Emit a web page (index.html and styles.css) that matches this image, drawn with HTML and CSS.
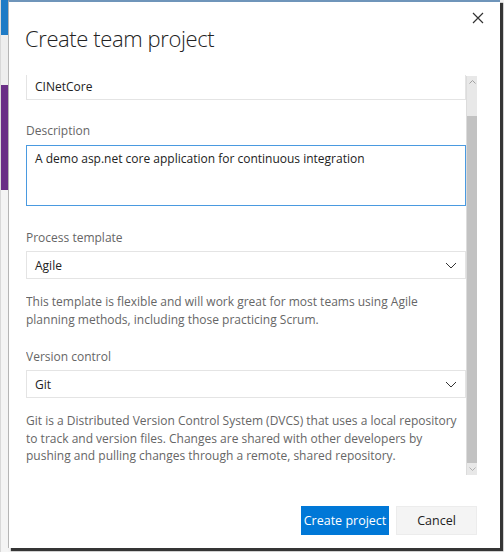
FILE: index.html
```html
<!DOCTYPE html>
<html>
<head>
<meta charset="utf-8">
<link rel="stylesheet" href="styles.css">
</head>
<body>
<div class="screen">
  <div class="strip">
    <div class="strip-blue"></div>
    <div class="strip-gray"></div>
    <div class="strip-purple"></div>
    <div class="strip-light"></div>
  </div>
  <div class="dialog">
    <div class="header">
      <h1 class="title">Create team project</h1>
      <button class="close" aria-label="Close">
        <svg width="12" height="12" viewBox="0 0 12 12"><path d="M1 1 L11 11 M11 1 L1 11" stroke="#333" stroke-width="1.2" fill="none"/></svg>
      </button>
    </div>
    <div class="scroll-area">
      <div class="content">
        <div class="scrolled">
          <div class="input">CINetCore</div>
          <div class="label label-first">Description</div>
          <div class="textarea">A demo asp.net core application for continuous integration</div>
          <div class="label label-after-area">Process template</div>
          <div class="select">
            <span>Agile</span>
            <svg class="chev" width="12" height="7" viewBox="0 0 12 7"><path d="M1 1 L6 6 L11 1" stroke="#333" stroke-width="1" fill="none"/></svg>
          </div>
          <p class="help">This template is flexible and will work great for most teams using Agile planning methods, including those practicing Scrum.</p>
          <div class="label label-after-help">Version control</div>
          <div class="select">
            <span>Git</span>
            <svg class="chev" width="12" height="7" viewBox="0 0 12 7"><path d="M1 1 L6 6 L11 1" stroke="#333" stroke-width="1" fill="none"/></svg>
          </div>
          <p class="help help-git">Git is a Distributed Version Control System (DVCS) that uses a local repository to track and version files. Changes are shared with other developers by pushing and pulling changes through a remote, shared repository.</p>
        </div>
      </div>
      <div class="scrollbar">
        <div class="sb-arrow sb-up"><svg width="7" height="4" viewBox="0 0 7 4"><path d="M0.5 3.5 L3.5 0.5 L6.5 3.5" stroke="#a0a0a0" fill="none"/></svg></div>
        <div class="sb-gap"></div>
        <div class="sb-thumb"></div>
        <div class="sb-arrow sb-down"><svg width="7" height="4" viewBox="0 0 7 4"><path d="M0.5 0.5 L3.5 3.5 L6.5 0.5" stroke="#b0b0b0" fill="none"/></svg></div>
      </div>
    </div>
    <div class="footer">
      <button class="btn btn-primary">Create project</button>
      <button class="btn btn-secondary">Cancel</button>
    </div>
  </div>
</div>
</body>
</html>
```
FILE: styles.css
```css
* { box-sizing: border-box; }
html, body { margin: 0; padding: 0; }
body {
  width: 504px;
  height: 552px;
  overflow: hidden;
  background: #f2f2f2;
  font-family: "Open Sans", "Noto Sans", sans-serif;
  font-size: 12px;
  color: #222;
}
.screen {
  display: flex;
  height: 552px;
}
.strip {
  width: 8px;
  display: flex;
  flex-direction: column;
  border-left: 1px solid #d8d8d8;
}
.strip-blue { height: 35px; background: #1e7bc6; }
.strip-gray { height: 50px; background: #eeeeee; }
.strip-purple { height: 105px; background: #6a2f86; }
.strip-light { flex: 1; background: #f4f4f4; }
.dialog {
  width: 492px;
  height: 548px;
  background: #fff;
  border-top: 2px solid #6f95ba;
  border-left: 1px solid #b5b5b5;
  box-shadow: 3px 3px 1px rgba(0,0,0,0.78);
  display: flex;
  flex-direction: column;
}
.header {
  display: flex;
  justify-content: space-between;
  align-items: flex-start;
  padding: 10px 16px 0 16px;
}
.title {
  margin: 10px 0 0 0;
  font-family: "Open Sans", sans-serif;
  font-weight: 300;
  font-size: 22px;
  letter-spacing: -0.4px;
  line-height: 32px;
  color: #222;
}
.close {
  width: 12px;
  height: 12px;
  padding: 0;
  border: none;
  background: none;
  display: flex;
}
.scroll-area {
  display: flex;
  margin: 21px 0 0 17px;
  width: 451px;
  height: 400px;
}
.content {
  width: 440px;
  overflow: hidden;
}
.scrolled { margin-top: -3px; }
.input, .select {
  height: 28px;
  border: 1px solid #e4e4e4;
  padding: 0 8px;
  line-height: 27px;
  color: #222;
}
.select {
  display: flex;
  justify-content: space-between;
  align-items: center;
  padding-right: 8px;
}
.chev { margin-top: 1px; }
.label {
  line-height: 18px;
  color: #666;
  margin-bottom: 4px;
}
.label-first { margin-top: 22px; margin-bottom: 5px; }
.label-after-area { margin-top: 23px; }
.label-after-help { margin-top: 19px; }
.textarea {
  height: 61px;
  border: 1px solid #4a9ae0;
  padding: 4px 8px;
  line-height: 18px;
  color: #222;
}
.help {
  margin: 14px 0 0 0;
  color: #666;
  line-height: 18px;
}
.help-git { line-height: 17.5px; }
.scrollbar {
  width: 11px;
  display: flex;
  flex-direction: column;
  background: #e8e8e8;
  border-left: 1px solid #dcdcdc;
  margin-top: 1px;
}
.sb-arrow {
  height: 12px;
  display: flex;
  align-items: center;
  justify-content: center;
}
.sb-gap { height: 28px; }
.sb-thumb { flex: 1; background: #c2c2c2; }
.footer {
  display: flex;
  justify-content: flex-end;
  gap: 7px;
  padding-right: 23px;
  margin-top: 31px;
}
.btn {
  height: 29px;
  border: none;
  font-family: "Open Sans", sans-serif;
  font-size: 12.5px;
  padding: 0;
}
.btn-primary {
  width: 88px;
  background: #0078d7;
  color: #fff;
}
.btn-secondary {
  width: 81px;
  background: #f4f4f4;
  border: 1px solid #ececec;
  color: #222;
}
```
